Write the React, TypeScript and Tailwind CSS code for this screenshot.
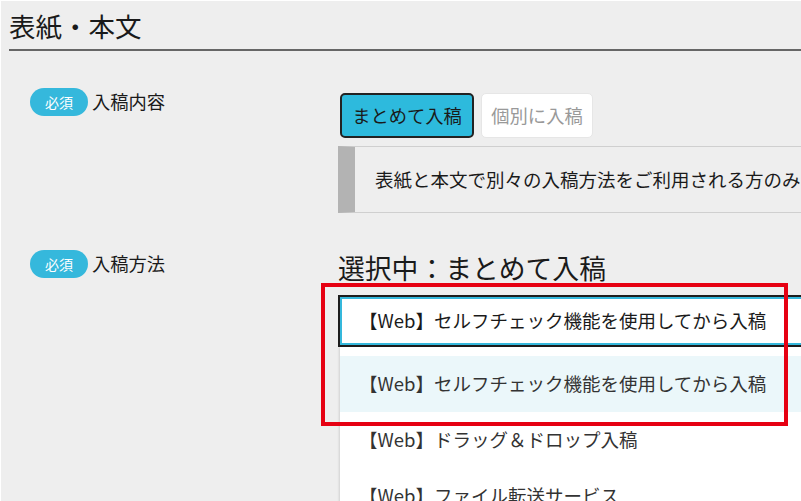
export default function App() {
  const options = [
    '【Web】セルフチェック機能を使用してから入稿',
    '【Web】ドラッグ＆ドロップ入稿',
    '【Web】ファイル転送サービス',
  ]

  return (
    <div className="relative w-[801px] h-[501px] overflow-hidden bg-[#eeeeee] border-t border-l border-white font-['Noto_Sans_CJK_JP','Noto_Sans',sans-serif] text-[#1a1a1a]">
      <div className="ml-2 pt-[6px] pb-[4px] border-b-2 border-[#666] text-[26.5px] leading-[38px]">
        表紙・本文
      </div>

      {/* 入稿内容 */}
      <div className="flex mt-[37px]">
        <div className="w-[337px] shrink-0 pl-[29px] flex items-center h-[28px] gap-1">
          <span className="w-[58px] h-[28px] rounded-full bg-[#35b8dc] text-white text-[14px] flex items-center justify-center">
            必須
          </span>
          <span className="text-[18.3px]">入稿内容</span>
        </div>
        <div className="flex-1 min-w-0 flex flex-col pt-[5px]">
          <div className="flex gap-[7px] ml-[2px]">
            <button className="h-[45px] w-[134px] bg-[#2dbadd] border-2 border-[#222] rounded-[5px] text-[18.3px] text-[#1a1a1a]">
              まとめて入稿
            </button>
            <button className="h-[45px] w-[112px] bg-white border border-[#e6e6e6] rounded-[5px] text-[18.3px] text-[#999]">
              個別に入稿
            </button>
          </div>
          <div className="mt-[8px] w-[520px] h-[67px] flex items-center border-l-[17px] border-l-[#b3b3b3] border-y border-y-[#cfcfcf] pl-[20px] text-[18.5px] whitespace-nowrap">
            表紙と本文で別々の入稿方法をご利用される方のみ
          </div>
        </div>
      </div>

      {/* 入稿方法 */}
      <div className="flex mt-[37px]">
        <div className="w-[337px] shrink-0 pl-[29px] flex items-center h-[28px] gap-1">
          <span className="w-[58px] h-[28px] rounded-full bg-[#35b8dc] text-white text-[14px] flex items-center justify-center">
            必須
          </span>
          <span className="text-[18.3px]">入稿方法</span>
        </div>
        <div className="flex-1 min-w-0 flex flex-col">
          <div className="text-[26.8px] leading-[36px] whitespace-nowrap">選択中：まとめて入稿</div>
          <div className="mt-[9px] w-[520px] border-2 border-[#1d1d1d]">
            <div className="h-[48px] border-2 border-[#35b8dc] bg-white flex items-center pl-[17px] text-[18.5px] whitespace-nowrap">
              {options[0]}
            </div>
          </div>
          <div className="ml-[2px] w-[520px] bg-white pt-[9px] shadow-[-1px_0_2px_rgba(0,0,0,0.12)]">
            {options.map((o, i) => (
              <div
                key={o}
                className={`h-[56px] flex items-center pl-[19px] text-[18.5px] text-[#333] whitespace-nowrap ${i === 0 ? 'bg-[#ebf7fa]' : ''}`}
              >
                {o}
              </div>
            ))}
          </div>
        </div>
      </div>

      <div className="absolute left-[320px] top-[282px] w-[467px] h-[143px] border-4 border-[#e60012]" />
    </div>
  )
}
